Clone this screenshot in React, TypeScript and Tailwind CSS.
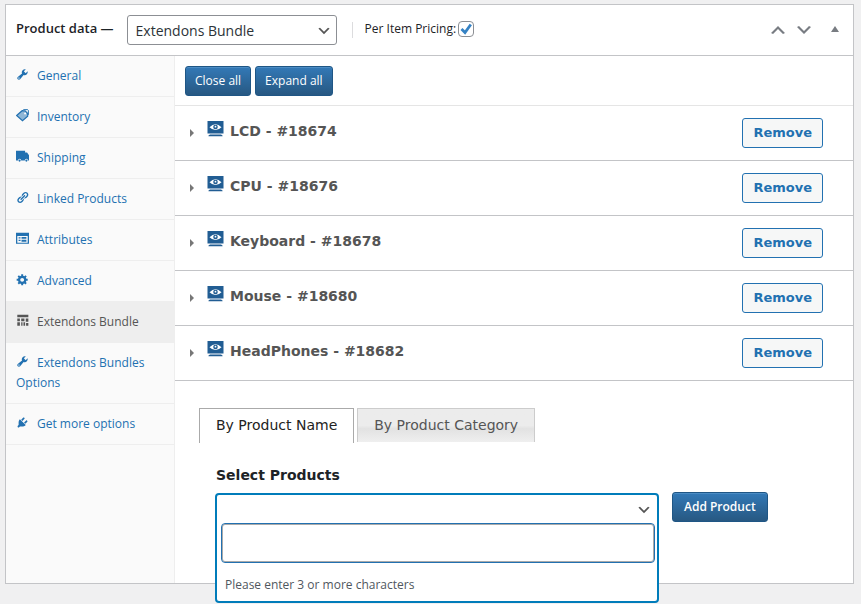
import React, { useState } from "react";

type IconProps = { className?: string };

const paths = {
  wrench:
    "M16.68 9.77c-1.34 1.34-3.3 1.67-4.95.99l-5.41 6.52c-.99.99-2.59.99-3.58 0s-.99-2.59 0-3.57l6.52-5.42c-.68-1.65-.35-3.61.99-4.95 1.28-1.28 3.12-1.62 4.72-1.06l-2.89 2.89 2.82 2.82 2.86-2.87c.53 1.58.18 3.39-1.08 4.65zM3.81 16.21c.4.39 1.04.39 1.43 0 .4-.4.4-1.04 0-1.43-.39-.4-1.03-.4-1.43 0-.39.39-.39 1.03 0 1.43z",
  link: "M17.74 2.76c1.68 1.69 1.68 4.41 0 6.1l-1.53 1.52c-1.12 1.12-2.7 1.47-4.14 1.09l2.62-2.61.76-.77.76-.76c.84-.84.84-2.2 0-3.04-.84-.85-2.2-.85-3.04 0l-.77.76-3.38 3.38c-.37-1.44-.02-3.02 1.1-4.14l1.52-1.53c1.69-1.68 4.42-1.68 6.1 0zM8.59 13.43l5.34-5.34c.42-.42.42-1.1 0-1.52-.44-.43-1.13-.39-1.53 0l-5.33 5.34c-.42.42-.42 1.1 0 1.52.44.43 1.13.39 1.52 0zm-.76 2.29l4.14-4.15c.38 1.44.03 3.02-1.09 4.14l-1.52 1.53c-1.69 1.68-4.41 1.68-6.1 0-1.68-1.68-1.68-4.42 0-6.1l1.53-1.52c1.12-1.12 2.7-1.47 4.14-1.1l-4.14 4.15c-.85.84-.85 2.2 0 3.05.84.84 2.2.84 3.04 0z",
  gear: "M18 12h-2.18c-.17.7-.44 1.35-.81 1.93l1.54 1.54-2.1 2.1-1.54-1.54c-.58.36-1.23.63-1.91.79V19H8v-2.18c-.68-.16-1.33-.43-1.91-.79l-1.54 1.54-2.12-2.12 1.54-1.54c-.36-.58-.63-1.23-.79-1.91H1V9.03h2.17c.16-.7.44-1.35.8-1.94L2.43 5.55l2.1-2.1 1.54 1.54c.58-.37 1.24-.64 1.93-.81V2h3v2.18c.68.16 1.33.43 1.91.79l1.54-1.54 2.12 2.12-1.54 1.54c.36.59.64 1.24.8 1.94H18V12zm-8.5 1.5c1.66 0 3-1.34 3-3s-1.34-3-3-3-3 1.34-3 3 1.34 3 3 3z",
  plug: "M13.11 4.36L9.87 7.6 8 5.73l3.24-3.24c.35-.34 1.05-.2 1.56.32.52.51.66 1.21.31 1.55zm-8 1.77l.91-1.12 9.01 9.01-1.19.84c-.71.71-2.63 1.16-3.82 1.16H6.14L4.9 17.26c-.59.59-1.54.59-2.12 0-.59-.58-.59-1.53 0-2.12l1.24-1.24v-3.88c0-1.13.4-3.19 1.09-3.89zm7.26 3.97l3.24-3.24c.34-.35 1.04-.21 1.55.31.52.51.66 1.21.31 1.55l-3.24 3.25z",
  down: "M5 6l5 5 5-5 2 1-7 7-7-7z",
  up: "M15 14l-5-5-5 5-2-1 7-7 7 7z",
  truck:
    "M0 1h14v3h3l3 4v8h-1.500a2.500 2.500 0 0 0-5 0H8a2.500 2.500 0 0 0-5 0H0zM5.500 14.500a1.700 1.700 0 1 0 0 3.400 1.700 1.700 0 0 0 0-3.400zM16 14.500a1.700 1.700 0 1 0 0 3.400 1.700 1.700 0 0 0 0-3.400z",
  form: "M0 1h20v17H0zM2 6v10.500h16V6zM4 8h3v2H4zM4 12h3v2H4zM8.500 7.500H16v3H8.500zM8.500 12H16v3H8.500z",
  grid: "M2 1h17v4H2zM2 7h4v4H2zM2 12.500h4V18H2zM8 7h5v4H8zM8 12.500h2V18H8zM11.500 12.500H14V18h-2.500zM15 7h4v5h-4zM15.500 14H19v4h-3.500z",
};

function Glyph({ name, className }: { name: keyof typeof paths } & IconProps) {
  return (
    <svg viewBox="0 0 20 20" fill="currentColor" fillRule="evenodd" aria-hidden="true" className={className}>
      <path d={paths[name]} />
    </svg>
  );
}

function Tag({ className }: IconProps) {
  return (
    <svg viewBox="0 0 20 20" aria-hidden="true" className={className}>
      <path
        d="M1 10 9 3h5l4 4v4l-8 7z"
        fill="currentColor"
        fillOpacity="0.5"
        stroke="currentColor"
        strokeWidth="1.800"
      />
      <path d="M9 3 12 1h6l1 1v7" fill="none" stroke="currentColor" strokeWidth="1.500" />
      <circle cx="14" cy="7" r="1.500" fill="#fff" />
    </svg>
  );
}

function Monitor() {
  return (
    <svg viewBox="0 0 17 16" aria-hidden="true" className="h-4 w-[17px]">
      <rect x="0.500" y="0" width="16" height="12.500" fill="#215d93" />
      <path d="M3 13.500h11l1.500 1v.8h-14v-.8z" fill="#215d93" />
      <path d="M2.500 6.200Q8.500.2 14.500 6.200 8.500 12 2.500 6.200z" fill="#fff" />
      <circle cx="8.500" cy="6" r="2.300" fill="#215d93" />
      <circle cx="8.500" cy="5.700" r="0.900" fill="#fff" />
    </svg>
  );
}

type MenuItem = { label: string; icon: keyof typeof paths | "tag"; active?: boolean };

const menu: MenuItem[] = [
  { label: "General", icon: "wrench" },
  { label: "Inventory", icon: "tag" },
  { label: "Shipping", icon: "truck" },
  { label: "Linked Products", icon: "link" },
  { label: "Attributes", icon: "form" },
  { label: "Advanced", icon: "gear" },
  { label: "Extendons Bundle", icon: "grid", active: true },
  { label: "Extendons Bundles Options", icon: "wrench" },
  { label: "Get more options", icon: "plug" },
];

const products = [
  "LCD - #18674",
  "CPU - #18676",
  "Keyboard - #18678",
  "Mouse - #18680",
  "HeadPhones - #18682",
];

const primary =
  "h-[30px] rounded-[3px] border border-[#1f5685] bg-linear-to-b from-[#3379b7] to-[#275882] text-white shadow-[inset_0_1px_0_#4b8cc4]";

export default function App() {
  const [perItem, setPerItem] = useState(true);

  return (
    <div className="min-h-screen bg-[#f0f0f1] pt-1 pr-[7px] pb-5 pl-[5px] font-['Open_Sans','Noto_Sans',sans-serif] text-[12px] text-[#1d2327]">
      <section className="border border-[#c3c4c7] bg-white">
        <header className="flex h-[51px] items-center border-b border-[#c3c4c7] pr-2 pl-[10px]">
          <label htmlFor="type" className="mr-[13px] pb-[2px] text-[13px] font-semibold whitespace-nowrap">
            Product data —
          </label>
          <div className="relative w-[210px]">
            <select
              id="type"
              className="block h-[30px] w-full appearance-none rounded-[3px] border border-[#8c8f94] bg-white px-2 text-[14px] text-[#2c3338]"
            >
              <option>Extendons Bundle</option>
            </select>
            <Glyph name="down" className="pointer-events-none absolute top-2 right-[5px] size-4 text-[#555]" />
          </div>
          <span className="mr-[12px] ml-[15px] h-4 w-px bg-[#dcdcde]" />
          <label className="flex items-center gap-[2px] pb-[3px] whitespace-nowrap">
            Per Item Pricing:
            <span className="relative flex size-4">
              <input
                type="checkbox"
                checked={perItem}
                onChange={(e) => setPerItem(e.target.checked)}
                className="peer size-4 appearance-none rounded-[4px] border border-[#8c8f94] bg-white"
              />
              <svg
                viewBox="0 0 16 16"
                aria-hidden="true"
                className="pointer-events-none absolute inset-0 hidden size-4 peer-checked:block"
              >
                <path d="M3.500 8 7 11.500 12.800 3.500" fill="none" stroke="#3582c4" strokeWidth="2.800" />
              </svg>
            </span>
          </label>
          <div className="ml-auto flex items-center text-[#787c82]">
            <button aria-label="Move up" className="flex w-[26px] justify-center">
              <Glyph name="up" className="size-5" />
            </button>
            <button aria-label="Move down" className="flex w-[26px] justify-center">
              <Glyph name="down" className="size-5" />
            </button>
            <button aria-label="Toggle panel" className="ml-2 flex w-5 justify-center">
              <svg viewBox="0 0 8 6" fill="currentColor" aria-hidden="true" className="mb-[2px] h-[6px] w-2">
                <path d="M4 0 8 6H0z" />
              </svg>
            </button>
          </div>
        </header>

        <div className="flex">
          <nav className="w-[169px] shrink-0 border-r border-[#eee] bg-[#fafafa]">
            <ul>
              {menu.map((item) => (
                <li key={item.label} className="border-b border-[#eee]">
                  <a
                    href="#"
                    className={
                      item.active
                        ? "block bg-[#eee] py-[10px] pr-2 pl-[10px] leading-5 text-[#555]"
                        : "block py-[10px] pr-2 pl-[10px] leading-5 text-[#2271b1]"
                    }
                  >
                    {item.icon === "tag" ? (
                      <Tag className="mr-2 mb-1 inline-block size-[13px]" />
                    ) : (
                      <Glyph name={item.icon} className="mr-2 mb-1 inline-block size-[13px]" />
                    )}
                    {item.label}
                  </a>
                </li>
              ))}
            </ul>
          </nav>

          <main className="min-w-0 flex-1 font-['DejaVu_Sans',Verdana,sans-serif]">
            <div className="flex h-[50px] items-center gap-1 border-b border-[#e5e5e5] px-[10px] font-['Open_Sans','Noto_Sans',sans-serif]">
              <button className={`${primary} px-[9px]`}>Close all</button>
              <button className={`${primary} px-[9px]`}>Expand all</button>
            </div>

            <ul>
              {products.map((name) => (
                <li key={name} className="flex h-[55px] items-center border-b border-[#c3c4c7] pr-[30px] pl-[15px]">
                  <svg viewBox="0 0 4 8" aria-hidden="true" className="mr-[13px] h-2 w-1 text-[#777]">
                    <path d="M0 0 4 4 0 8z" fill="currentColor" />
                  </svg>
                  <div className="mb-[3px] flex items-center gap-[6px]">
                    <div className="mb-[6px]">
                      <Monitor />
                    </div>
                    <h3 className="text-[14px] font-bold text-[#555]">{name}</h3>
                  </div>
                  <button className="ml-auto h-[30px] rounded-[3px] border border-[#2271b1] bg-[#f6f7f7] px-[10px] text-[13px] font-bold text-[#2271b1]">
                    Remove
                  </button>
                </li>
              ))}
            </ul>

            <div className="px-6 pt-[27px] pb-[60px]">
              <div role="tablist" className="flex items-start gap-[3px] text-[14px]">
                <button
                  role="tab"
                  aria-selected="true"
                  className="h-[35px] border border-b-0 border-[#aaa] px-4 pb-[2px] text-[#222]"
                >
                  By Product Name
                </button>
                <button
                  role="tab"
                  aria-selected="false"
                  className="h-[34px] border border-b-0 border-[#ccc] bg-linear-to-b from-[#ececec] from-50% via-[#e2e2e2] via-60% to-[#efefef] px-4 text-[#555]"
                >
                  By Product Category
                </button>
              </div>

              <div className="pt-5 pl-4">
                <label htmlFor="search" className="block pl-px text-[14px] leading-6 font-bold">
                  Select Products
                </label>
                <div className="mt-[5px] flex items-start gap-[13px] font-['Open_Sans','Noto_Sans',sans-serif]">
                  <div className="relative mt-px h-[30px] w-[444px]">
                    <div className="absolute inset-x-0 top-0 rounded-[4px] border-2 border-[#007cba] bg-white">
                      <div className="flex h-7 items-center justify-end pt-px pr-[5px]">
                        <Glyph name="down" className="size-4 text-[#555]" />
                      </div>
                      <div className="pr-[2px] pl-1">
                        <input
                          id="search"
                          type="text"
                          className="block h-10 w-full rounded-[4px] border border-[#2271b1] bg-white px-2 shadow-[inset_0_0_0_1px_#aaa] outline-none"
                        />
                      </div>
                      <p className="px-2 pt-[13px] pb-[7px] leading-[18px] text-[#50575e]">
                        Please enter 3 or more characters
                      </p>
                    </div>
                  </div>
                  <button className={`${primary} px-[11px] font-semibold`}>Add Product</button>
                </div>
              </div>
            </div>
          </main>
        </div>
      </section>
    </div>
  );
}
